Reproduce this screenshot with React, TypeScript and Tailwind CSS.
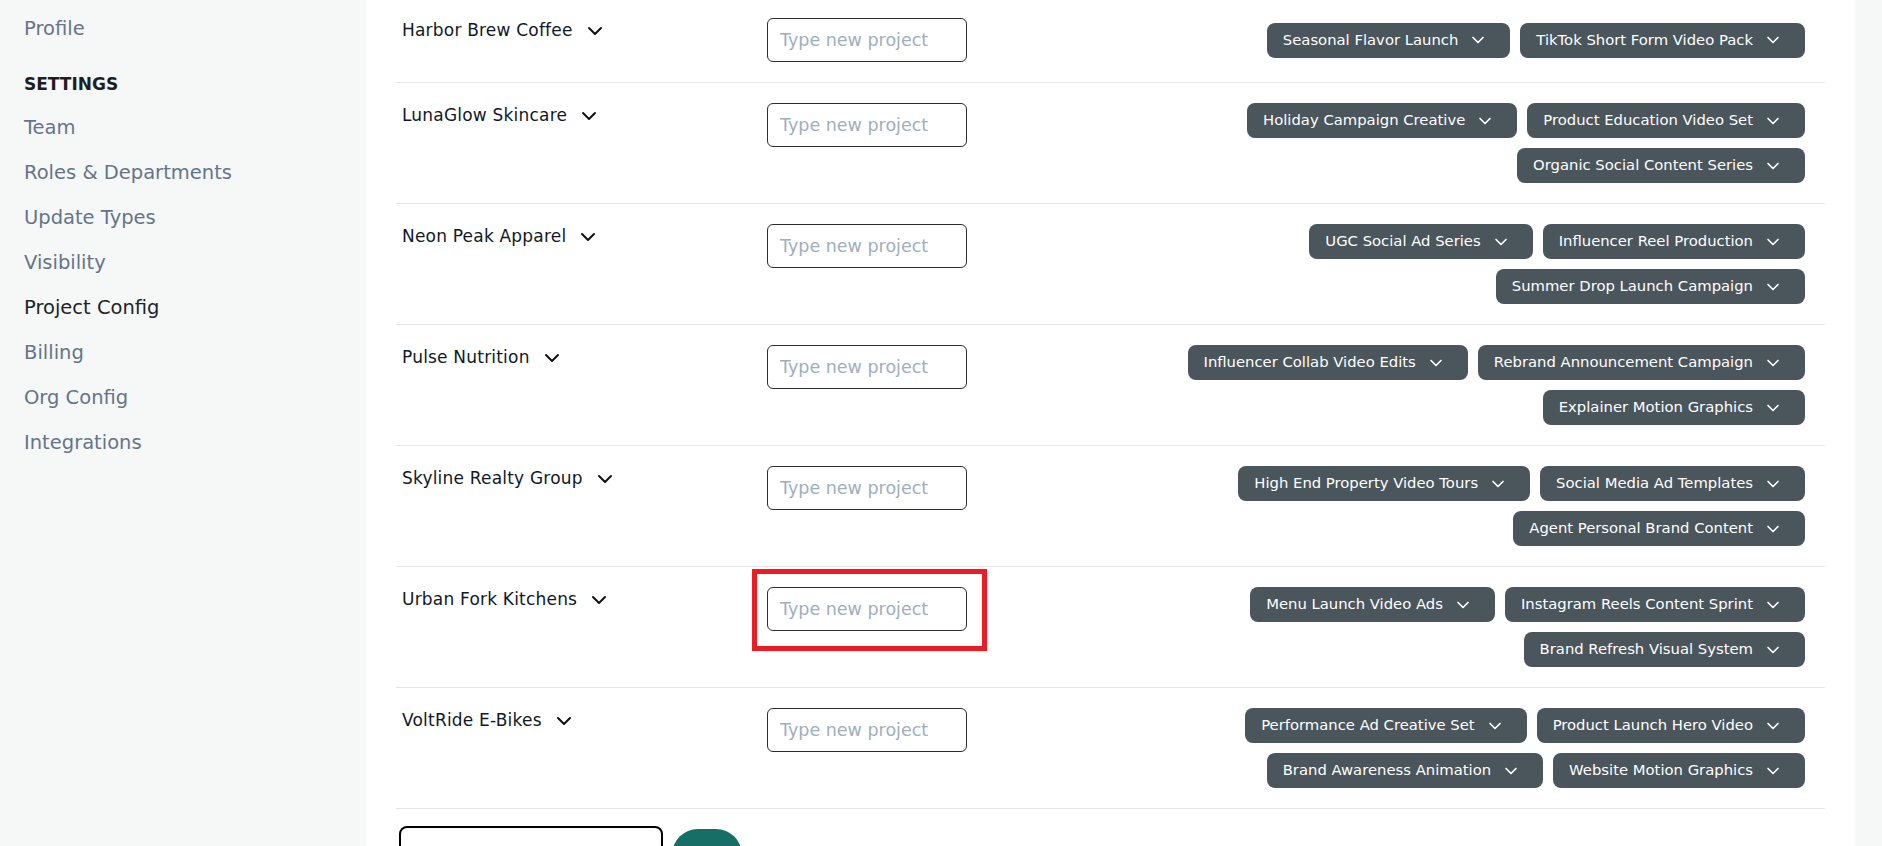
import { useEffect, useRef } from 'react';
import { ChevronDown } from 'lucide-react';

const clients = [
  {
    name: 'Harbor Brew Coffee',
    lines: [['Seasonal Flavor Launch', 'TikTok Short Form Video Pack']],
  },
  {
    name: 'LunaGlow Skincare',
    lines: [
      ['Holiday Campaign Creative', 'Product Education Video Set'],
      ['Organic Social Content Series'],
    ],
  },
  {
    name: 'Neon Peak Apparel',
    lines: [
      ['UGC Social Ad Series', 'Influencer Reel Production'],
      ['Summer Drop Launch Campaign'],
    ],
  },
  {
    name: 'Pulse Nutrition',
    lines: [
      ['Influencer Collab Video Edits', 'Rebrand Announcement Campaign'],
      ['Explainer Motion Graphics'],
    ],
  },
  {
    name: 'Skyline Realty Group',
    lines: [
      ['High End Property Video Tours', 'Social Media Ad Templates'],
      ['Agent Personal Brand Content'],
    ],
  },
  {
    name: 'Urban Fork Kitchens',
    highlight: true,
    lines: [
      ['Menu Launch Video Ads', 'Instagram Reels Content Sprint'],
      ['Brand Refresh Visual System'],
    ],
  },
  {
    name: 'VoltRide E-Bikes',
    lines: [
      ['Performance Ad Creative Set', 'Product Launch Hero Video'],
      ['Brand Awareness Animation', 'Website Motion Graphics'],
    ],
  },
];

const settingsLinks = [
  'Team',
  'Roles & Departments',
  'Update Types',
  'Visibility',
  'Project Config',
  'Billing',
  'Org Config',
  'Integrations',
];

function ProjectPill({ label }: { label: string }) {
  return (
    <button className="h-[35px] pl-4 pr-[22px] rounded-lg bg-[#4b555c] text-white text-[14.8px] flex items-center gap-2.5 whitespace-nowrap">
      {label}
      <ChevronDown size={20} strokeWidth={2} />
    </button>
  );
}

export default function App() {
  const newClientRef = useRef<HTMLInputElement>(null);

  useEffect(() => {
    newClientRef.current?.focus({ preventScroll: true });
  }, []);

  return (
    <div className="flex h-screen overflow-hidden font-['DejaVu_Sans',sans-serif]">
      <aside className="w-[366px] shrink-0 bg-[#f6f8f8] pl-6 pt-[6px]">
        <div className="h-[45px] flex items-center text-[19.5px] text-[#64748b]">
          Profile
        </div>
        <div className="mt-[19px] h-[30px] flex items-center text-[17px] font-bold text-[#1e1e1e]">
          SETTINGS
        </div>
        <nav className="mt-[5px]">
          {settingsLinks.map((link) => (
            <div
              key={link}
              className={
                link === 'Project Config'
                  ? 'h-[45px] flex items-center text-[19.5px] text-[#1f2328]'
                  : 'h-[45px] flex items-center text-[19.5px] text-[#64748b]'
              }
            >
              {link}
            </div>
          ))}
        </nav>
      </aside>

      <main className="flex-1 bg-white px-[30px]">
        <div className="-mt-[2px]">
          {clients.map((client) => (
            <div
              key={client.name}
              className="flex items-start py-5 pl-1.5 pr-5 border-b border-[#e5e7eb]"
            >
              <div className="w-[365px] shrink-0 h-[26px] flex items-center gap-2.5 text-[17px] tracking-[0.2px] text-[#111827]">
                {client.name}
                <ChevronDown size={24} strokeWidth={2} className="text-[#111]" />
              </div>
              <div className="relative shrink-0">
                <input
                  placeholder="Type new project"
                  className="w-[200px] h-[44px] px-3 rounded-md border border-[#2d2d2d] text-[17.5px] outline-none placeholder:text-[#a0aec0]"
                />
                {client.highlight && (
                  <span className="absolute -left-[15px] -top-[18px] w-[235px] h-[82px] border-[5px] border-[#ec1c24] pointer-events-none" />
                )}
              </div>
              <div className="flex-1 min-h-[44px] flex flex-col items-end justify-center gap-2.5">
                {client.lines.map((line, i) => (
                  <div key={i} className="flex gap-2.5">
                    {line.map((project) => (
                      <ProjectPill key={project} label={project} />
                    ))}
                  </div>
                ))}
              </div>
            </div>
          ))}
        </div>

        <div className="mt-[17px] pl-[3px] flex items-start gap-[9px]">
          <input
            ref={newClientRef}
            className="w-[264px] h-[46px] pl-[13px] rounded-lg border-2 border-black text-[16px] outline-none"
          />
          <button className="mt-[3px] w-[70px] h-[52px] rounded-full bg-[#166f67] text-white text-[15px]">
            Add
          </button>
        </div>
      </main>

      <div className="w-[27px] shrink-0 bg-[#f6f8f8]" />
    </div>
  );
}
